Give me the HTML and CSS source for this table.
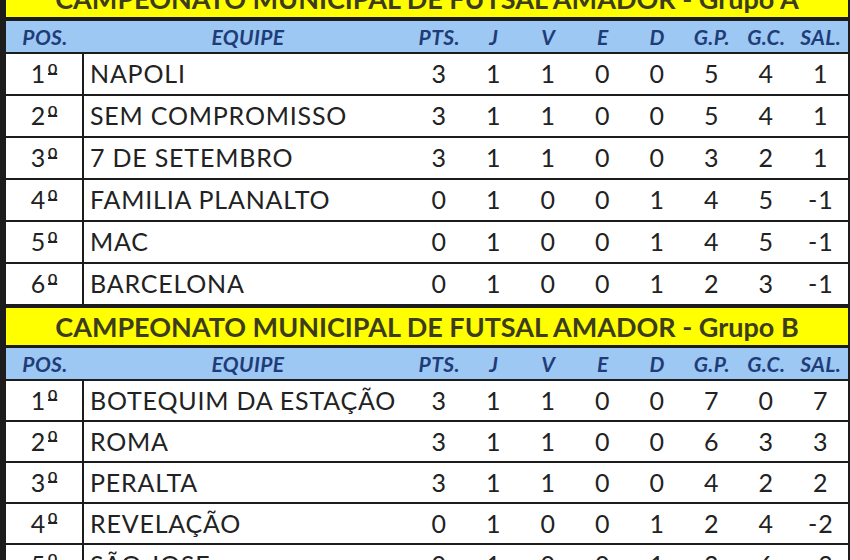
FILE: index.html
```html
<!DOCTYPE html>
<html>
<head>
    <title>Campeonato Municipal de Futsal Amador</title>
    <link rel="stylesheet" href="styles.css">
</head>
<body>
    <div class="sheet">
        <!-- Grupo A -->
        <div class="group">
            <div class="title">CAMPEONATO MUNICIPAL DE FUTSAL AMADOR - Grupo A</div>
            <div class="line head">
                <span>POS.</span><span>EQUIPE</span><span>PTS.</span><span>J</span><span>V</span><span>E</span><span>D</span><span>G.P.</span><span>G.C.</span><span>SAL.</span>
            </div>
            <div class="line row"><span class="pos">1<span class="ord">º</span></span><span class="team">NAPOLI</span><span>3</span><span>1</span><span>1</span><span>0</span><span>0</span><span>5</span><span>4</span><span>1</span></div>
            <div class="line row"><span class="pos">2<span class="ord">º</span></span><span class="team">SEM COMPROMISSO</span><span>3</span><span>1</span><span>1</span><span>0</span><span>0</span><span>5</span><span>4</span><span>1</span></div>
            <div class="line row"><span class="pos">3<span class="ord">º</span></span><span class="team">7 DE SETEMBRO</span><span>3</span><span>1</span><span>1</span><span>0</span><span>0</span><span>3</span><span>2</span><span>1</span></div>
            <div class="line row"><span class="pos">4<span class="ord">º</span></span><span class="team">FAMILIA PLANALTO</span><span>0</span><span>1</span><span>0</span><span>0</span><span>1</span><span>4</span><span>5</span><span>-1</span></div>
            <div class="line row"><span class="pos">5<span class="ord">º</span></span><span class="team">MAC</span><span>0</span><span>1</span><span>0</span><span>0</span><span>1</span><span>4</span><span>5</span><span>-1</span></div>
            <div class="line row"><span class="pos">6<span class="ord">º</span></span><span class="team">BARCELONA</span><span>0</span><span>1</span><span>0</span><span>0</span><span>1</span><span>2</span><span>3</span><span>-1</span></div>
        </div>

        <!-- Grupo B -->
        <div class="group group-b">
            <div class="title">CAMPEONATO MUNICIPAL DE FUTSAL AMADOR - Grupo B</div>
            <div class="line head">
                <span>POS.</span><span>EQUIPE</span><span>PTS.</span><span>J</span><span>V</span><span>E</span><span>D</span><span>G.P.</span><span>G.C.</span><span>SAL.</span>
            </div>
            <div class="line row"><span class="pos">1<span class="ord">º</span></span><span class="team">BOTEQUIM DA ESTAÇÃO</span><span>3</span><span>1</span><span>1</span><span>0</span><span>0</span><span>7</span><span>0</span><span>7</span></div>
            <div class="line row"><span class="pos">2<span class="ord">º</span></span><span class="team">ROMA</span><span>3</span><span>1</span><span>1</span><span>0</span><span>0</span><span>6</span><span>3</span><span>3</span></div>
            <div class="line row"><span class="pos">3<span class="ord">º</span></span><span class="team">PERALTA</span><span>3</span><span>1</span><span>1</span><span>0</span><span>0</span><span>4</span><span>2</span><span>2</span></div>
            <div class="line row"><span class="pos">4<span class="ord">º</span></span><span class="team">REVELAÇÃO</span><span>0</span><span>1</span><span>0</span><span>0</span><span>1</span><span>2</span><span>4</span><span>-2</span></div>
            <div class="line row"><span class="pos">5<span class="ord">º</span></span><span class="team">SÃO JOSE</span><span>0</span><span>1</span><span>0</span><span>0</span><span>1</span><span>3</span><span>6</span><span>-3</span></div>
        </div>
    </div>
</body>
</html>
```

FILE: styles.css
```css
:root {
    --rule: #1c1c1c;
    --title-bg: #ffff00;
    --title-color: #3c3c1e;
    --head-bg: #9dc8f3;
    --head-color: #1f3c78;
    --text-color: #222222;
}

body {
    margin: 0;
    padding: 0;
    background: #ffffff;
    font-family: Lato, 'Open Sans', sans-serif;
    color: var(--text-color);
    overflow: hidden;
}

.sheet {
    width: 842px;
    margin-top: -20px;
    border-left: 6px solid var(--rule);
    border-right: 2px solid var(--rule);
}

.title {
    height: 37px;
    line-height: 37px;
    background: var(--title-bg);
    color: var(--title-color);
    font-size: 27px;
    font-weight: bold;
    text-align: center;
    border-bottom: 4px solid var(--rule);
}

.group-b .title {
    border-top: 4px solid var(--rule);
    border-bottom-width: 3px;
}

.line {
    display: grid;
    grid-template-columns: 78px 328px repeat(8, 1fr);
    align-items: center;
    text-align: center;
}

.head {
    height: 31px;
    background: var(--head-bg);
    color: var(--head-color);
    font-size: 21px;
    font-weight: bold;
    font-style: italic;
    letter-spacing: 0.4px;
    border-bottom: 2px solid var(--rule);
}

.row {
    height: 40px;
    background: #ffffff;
    font-size: 25px;
    letter-spacing: 0.8px;
    border-bottom: 2px solid var(--rule);
}

.row > span {
    padding-bottom: 2px;
}

.group-b .row {
    height: 39px;
}

.group .row:last-child {
    border-bottom: none;
}

.row .pos {
    align-self: stretch;
    display: flex;
    align-items: center;
    justify-content: center;
    border-right: 2px solid var(--rule);
}

.ord {
    margin-left: 2px;
    font-family: 'Liberation Sans', sans-serif;
    font-size: 25px;
    letter-spacing: 0;
    text-decoration: underline;
    text-decoration-thickness: 2px;
    text-decoration-skip-ink: none;
    text-underline-offset: -9px;
}

.row .team {
    text-align: left;
    padding-left: 6px;
}
```
